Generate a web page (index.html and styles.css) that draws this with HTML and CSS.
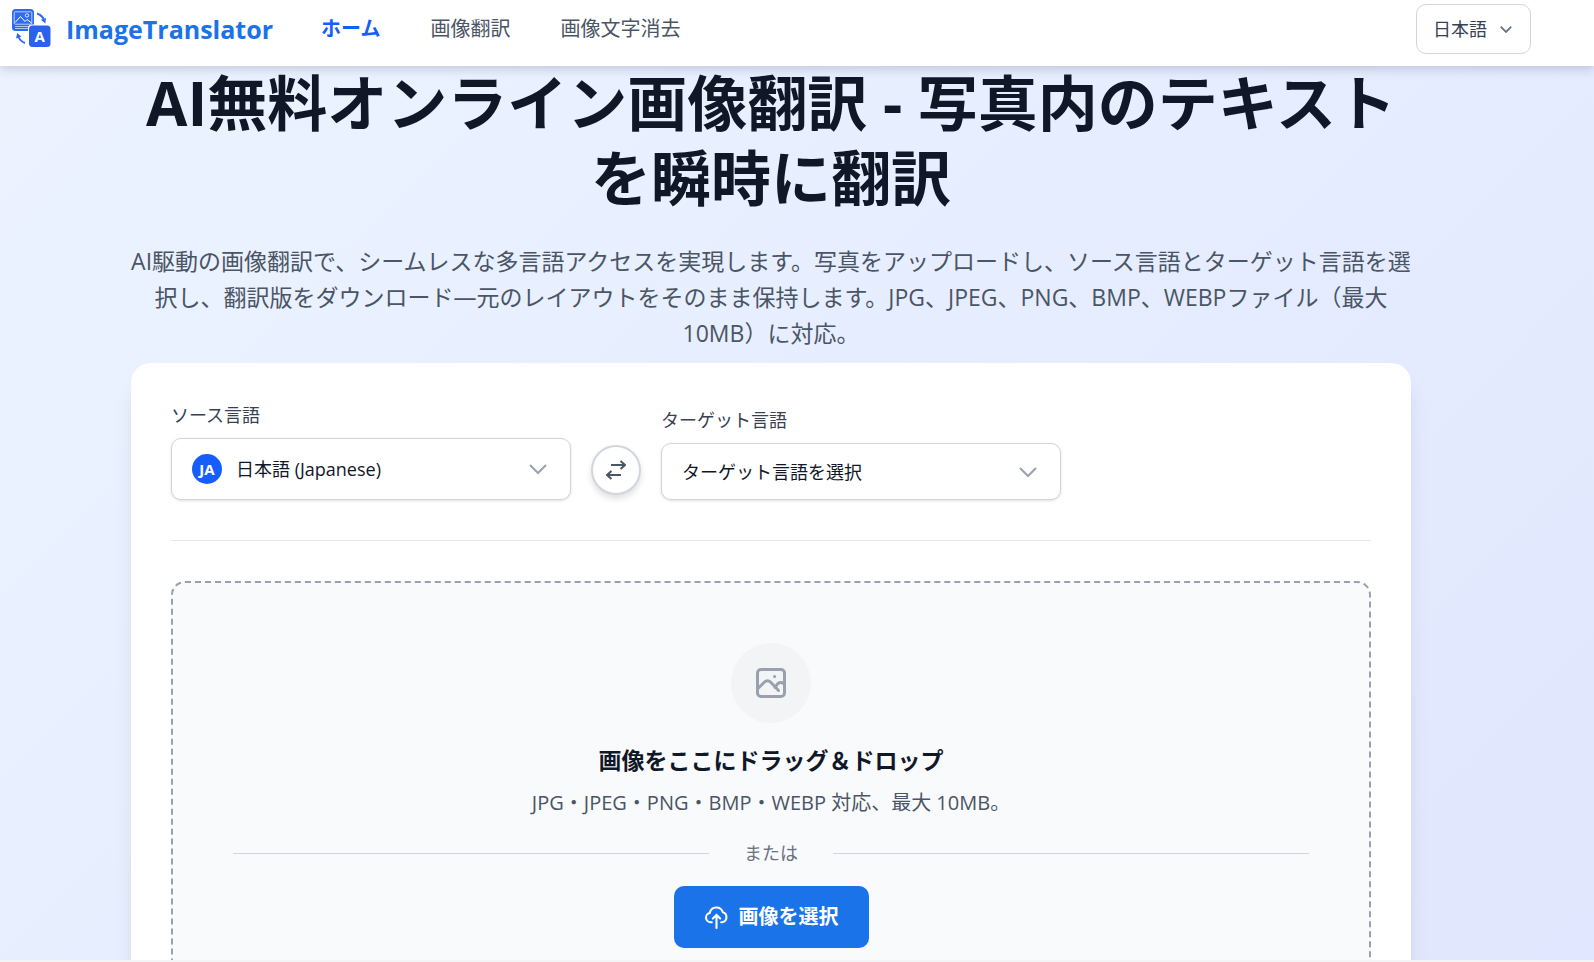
FILE: index.html
```html
<!DOCTYPE html>
<html lang="ja">
<head>
<meta charset="utf-8">
<meta name="viewport" content="width=device-width, initial-scale=1">
<title>ImageTranslator</title>
<link rel="stylesheet" href="styles.css">
</head>
<body>
<header class="header">
  <a class="brand" href="#">
    <svg class="brand-logo" viewBox="0 0 40 40" aria-hidden="true">
      <rect x="1" y="0" width="22" height="22" rx="3.500" fill="#2f6bf2"/>
      <rect x="3.200" y="2.800" width="17.600" height="12.400" rx="1" fill="none" stroke="#c9dafc" stroke-width=".9"/>
      <path d="M4 13.500l5.500-6 4.500 5 2-2 4.500 3.500" fill="none" stroke="#fff" stroke-width="1"/>
      <circle cx="16" cy="6.400" r="1.700" fill="none" stroke="#fff" stroke-width=".8"/>
      <path d="M4 17.500h16M4 19.500h13" stroke="#c9dafc" stroke-width=".8"/>
      <rect x="17" y="15.500" width="23" height="23.500" rx="4" fill="#fff"/>
      <rect x="18" y="16.500" width="21.500" height="21.500" rx="3.500" fill="#2a62ee"/>
      <text class="brand-letter" x="28.800" y="33" text-anchor="middle">A</text>
      <path d="M26 4.500q5.500 2 7 6.500" fill="none" stroke="#2f6bf2" stroke-width="1.900"/>
      <path d="M29.800 10.800l5.200-1.800-.6 5.500z" fill="#2f6bf2"/>
      <path d="M14 34q-5-2-6.700-6.500" fill="none" stroke="#2f6bf2" stroke-width="1.900"/>
      <path d="M5 29.500l1.200-5.500 4.300 3.800z" fill="#2f6bf2"/>
    </svg>
    <span class="brand-name">ImageTranslator</span>
  </a>
  <nav class="nav">
    <a class="nav-link nav-link-active" href="#">ホーム</a>
    <a class="nav-link" href="#">画像翻訳</a>
    <a class="nav-link" href="#">画像文字消去</a>
  </nav>
  <button class="lang-button" type="button">
    <span>日本語</span>
    <svg class="lang-chevron" viewBox="0 0 24 24" aria-hidden="true"><path d="M3 8l9 9 9-9"/></svg>
  </button>
</header>

<main class="main">
  <section class="hero">
    <h1 class="hero-title">AI無料オンライン画像翻訳 - 写真内のテキスト<br>を瞬時に翻訳</h1>
    <p class="hero-text">AI駆動の画像翻訳で、シームレスな多言語アクセスを実現します。写真をアップロードし、ソース言語とターゲット言語を選<br>択し、翻訳版をダウンロード—元のレイアウトをそのまま保持します。JPG、JPEG、PNG、BMP、WEBPファイル（最大<br>10MB）に対応。</p>
  </section>

  <section class="card">
    <div class="languages">
      <div class="field">
        <label class="field-label" for="source">ソース言語</label>
        <div class="field-box">
          <span class="field-badge" aria-hidden="true">JA</span>
          <select class="select select-source" id="source"><option>日本語 (Japanese)</option></select>
          <svg class="field-chevron" viewBox="0 0 20 20" aria-hidden="true"><path d="M2 6l8 8 8-8"/></svg>
        </div>
      </div>
      <button class="swap" type="button" aria-label="言語を入れ替える">
        <svg class="swap-icon" viewBox="0 0 20 20" aria-hidden="true"><path d="M5 5h14M14.500 1l4.500 4-4.500 4M15 15H1M5.500 11L1 15l4.500 4"/></svg>
      </button>
      <div class="field">
        <label class="field-label" for="target">ターゲット言語</label>
        <div class="field-box">
          <select class="select" id="target"><option>ターゲット言語を選択</option></select>
          <svg class="field-chevron" viewBox="0 0 20 20" aria-hidden="true"><path d="M2 6l8 8 8-8"/></svg>
        </div>
      </div>
    </div>

    <div class="dropzone">
      <div class="drop-icon">
        <svg class="drop-image" viewBox="0 0 40 40" aria-hidden="true">
          <rect x="6.500" y="6.500" width="27" height="27" rx="3.500"/>
          <path d="M7 25.500l6.500-6.500a4.200 4.200 0 0 1 6 0l8 8.500M24 24.500l2.500-3.500a4.500 4.500 0 0 1 6-.5M23.500 13.500h.1"/>
        </svg>
      </div>
      <h2 class="drop-title">画像をここにドラッグ＆ドロップ</h2>
      <p class="drop-hint">JPG・JPEG・PNG・BMP・WEBP 対応、最大 10MB。</p>
      <div class="divider">または</div>
      <button class="upload" type="button">
        <svg class="upload-icon" viewBox="0 0 24 24" aria-hidden="true"><path d="M7.500 16.500H6.500a4.500 4.500 0 0 1-1-8.900 6.500 6.500 0 0 1 12.600-.6 4.900 4.900 0 0 1-.6 9.500H16.500M12 22V10M8.500 13L12 9.500l3.500 3.500"/></svg>
        <span>画像を選択</span>
      </button>
    </div>
  </section>
</main>
</body>
</html>
```
FILE: styles.css
```css
* {
  box-sizing: border-box;
}

body {
  display: flex;
  flex-direction: column;
  height: 100vh;
  margin: 0;
  padding-bottom: 2px;
  overflow: hidden;
  background: #f3f4f6;
  color: #101828;
  font-family: "Open Sans", "Noto Sans CJK JP", sans-serif;
  font-size: 20px;
  line-height: 30px;
}

button,
select {
  font: inherit;
  cursor: pointer;
}

.header {
  position: relative;
  z-index: 1;
  flex: none;
  display: flex;
  align-items: center;
  padding: 4px 63px 12px 11px;
  background: #fff;
  box-shadow: 0 3px 10px rgb(30 41 80 / 20%);
}

.brand {
  display: flex;
  align-items: center;
  gap: 15px;
  color: #1a73e8;
  text-decoration: none;
}

.brand-logo {
  width: 40px;
  height: 40px;
}

.brand-letter {
  fill: #fff;
  font-size: 15px;
  font-weight: 700;
}

.brand-name {
  font-size: 25px;
  font-weight: 700;
  line-height: 28px;
}

.nav {
  display: flex;
  gap: 50px;
  margin-left: 48px;
}

.nav-link {
  color: #4a5565;
  text-decoration: none;
}

.nav-link-active {
  color: #155dfc;
  font-weight: 700;
}

.lang-button {
  display: flex;
  align-items: center;
  gap: 12px;
  height: 50px;
  margin-left: auto;
  padding: 0 17px 0 16px;
  border: 1px solid #d1d5dc;
  border-radius: 10px;
  background: #fff;
  color: #364153;
  font-size: 18px;
}

.lang-chevron {
  width: 14px;
  height: 14px;
  fill: none;
  stroke: #6a7282;
  stroke-width: 3;
}

.main {
  flex: 1;
  min-height: 0;
  padding-right: 52px;
  overflow: hidden;
  background: linear-gradient(135deg, #ecf3ff, #e0e7fe);
}

.hero {
  text-align: center;
}

.hero-title {
  margin: 0 0 27px;
  font-size: 60px;
  font-weight: 700;
  line-height: 75px;
}

.hero-text {
  margin: 0 0 12px;
  color: #4a5565;
  font-size: 23px;
  line-height: 36px;
}

.card {
  max-width: 1280px;
  margin: 0 auto;
  padding: 40px;
  border-radius: 20px;
  background: #fff;
  box-shadow: 0 20px 25px -5px rgb(0 0 0 / 10%), 0 8px 10px -6px rgb(0 0 0 / 10%);
}

.languages {
  display: flex;
  align-items: flex-end;
  gap: 20px;
  padding-bottom: 40px;
  border-bottom: 1px solid #e5e7eb;
}

.field {
  flex: 0 1 400px;
}

.field-label {
  display: block;
  margin-bottom: 10px;
  color: #364153;
  font-size: 18px;
  line-height: 25px;
}

.field-box {
  position: relative;
}

.select {
  display: block;
  width: 100%;
  height: 57px;
  padding: 0 50px 0 20px;
  border: 1px solid #d1d5dc;
  border-radius: 10px;
  background: #fff;
  box-shadow: 0 1px 3px rgb(0 0 0 / 12%);
  color: #101828;
  font-size: 18px;
  appearance: none;
}

.select-source {
  height: 62px;
  padding-left: 64px;
}

.field-badge {
  position: absolute;
  top: 16px;
  left: 21px;
  width: 30px;
  height: 30px;
  border-radius: 50%;
  background: #155dfc;
  color: #fff;
  font-size: 15px;
  font-weight: 700;
  text-align: center;
}

.field-chevron {
  position: absolute;
  top: 50%;
  right: 23px;
  width: 20px;
  height: 20px;
  margin-top: -10px;
  fill: none;
  stroke: #99a1af;
  stroke-width: 2;
  pointer-events: none;
}

.swap {
  display: flex;
  align-items: center;
  justify-content: center;
  width: 50px;
  height: 50px;
  margin-bottom: 5px;
  padding: 0;
  border: 2px solid #d1d5dc;
  border-radius: 50%;
  background: #fff;
  box-shadow: 0 4px 6px rgb(0 0 0 / 12%);
}

.swap-icon {
  width: 20px;
  height: 20px;
  fill: none;
  stroke: #4a5565;
  stroke-width: 2;
}

.dropzone {
  display: flex;
  flex-direction: column;
  align-items: center;
  margin-top: 40px;
  padding: 60px;
  border: 2px dashed #99a1af;
  border-radius: 14px;
  background: #f9fafb;
}

.drop-icon {
  display: flex;
  align-items: center;
  justify-content: center;
  width: 80px;
  height: 80px;
  margin-bottom: 20px;
  border-radius: 50%;
  background: #f3f4f6;
}

.drop-image {
  width: 40px;
  height: 40px;
  fill: none;
  stroke: #99a1af;
  stroke-width: 3;
  stroke-linecap: round;
}

.drop-title {
  margin: 0 0 10px;
  font-size: 23px;
  font-weight: 700;
  line-height: 35px;
}

.drop-hint {
  margin: 0 0 23px;
  color: #4a5565;
}

.divider {
  display: flex;
  align-items: center;
  gap: 35px;
  align-self: stretch;
  margin-bottom: 20px;
  color: #6a7282;
  font-size: 18px;
  line-height: 25px;
}

.divider::before,
.divider::after {
  flex: 1;
  height: 1px;
  background: #d1d5dc;
  content: "";
}

.upload {
  display: flex;
  align-items: center;
  gap: 10px;
  height: 62px;
  padding: 0 30px;
  border: 0;
  border-radius: 10px;
  background: #1a73e8;
  color: #fff;
  font-weight: 700;
}

.upload-icon {
  width: 25px;
  height: 25px;
  fill: none;
  stroke: #fff;
  stroke-width: 2;
  stroke-linecap: round;
}
```
